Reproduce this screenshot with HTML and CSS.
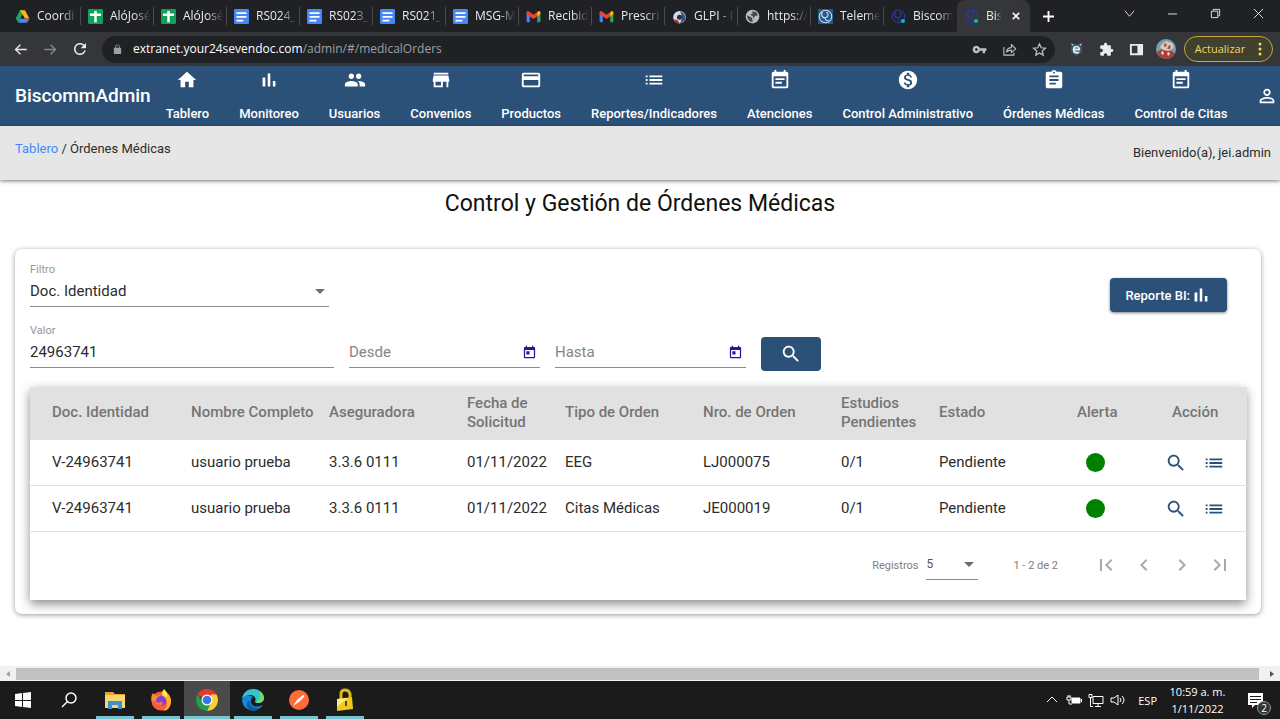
FILE: index.html
```html
<!DOCTYPE html>
<html lang="es">
<head>
<meta charset="utf-8">
<meta name="viewport" content="width=device-width, initial-scale=1">
<title>BiscommAdmin - Órdenes Médicas</title>
<link rel="stylesheet" href="styles.css">
</head>
<body>
<svg class="sprite" aria-hidden="true">
  <symbol id="home" viewBox="0 0 24 24"><path d="M10 20v-6h4v6h5v-8h3L12 3 2 12h3v8z"/></symbol>
  <symbol id="bars" viewBox="0 0 24 24"><path d="M5 9.200h3V19H5zM10.600 5h2.800v14h-2.800zm5.600 8H19v6h-2.800z"/></symbol>
  <symbol id="people" viewBox="0 0 24 24"><path d="M16 11c1.660 0 2.990-1.340 2.990-3S17.660 5 16 5c-1.660 0-3 1.340-3 3s1.340 3 3 3zm-8 0c1.660 0 2.990-1.340 2.990-3S9.660 5 8 5C6.340 5 5 6.340 5 8s1.340 3 3 3zm0 2c-2.330 0-7 1.170-7 3.500V19h14v-2.500c0-2.330-4.670-3.500-7-3.500zm8 0c-.29 0-.62.02-.97.05 1.160.84 1.970 1.970 1.970 3.450V19h6v-2.500c0-2.330-4.670-3.500-7-3.500z"/></symbol>
  <symbol id="store" viewBox="0 0 24 24"><path d="M20 4H4v2h16V4zm1 10v-2l-1-5H4l-1 5v2h1v6h10v-6h4v6h2v-6h1zm-9 4H6v-4h6v4z"/></symbol>
  <symbol id="card" viewBox="0 0 24 24"><path d="M20 4H4c-1.110 0-1.990.89-1.990 2L2 18c0 1.110.89 2 2 2h16c1.110 0 2-.89 2-2V6c0-1.110-.89-2-2-2zm0 14H4v-6h16v6zm0-10H4V6h16v2z"/></symbol>
  <symbol id="list" viewBox="0 0 24 24"><path d="M3 13h2v-2H3v2zm0 4h2v-2H3v2zm0-8h2V7H3v2zm4 4h14v-2H7v2zm0 4h14v-2H7v2zM7 7v2h14V7H7z"/></symbol>
  <symbol id="note" viewBox="0 0 24 24"><path d="M17 10H7v2h10v-2zm2-7h-1V1h-2v2H8V1H6v2H5c-1.110 0-1.990.9-1.990 2L3 19c0 1.100.89 2 2 2h14c1.100 0 2-.9 2-2V5c0-1.100-.9-2-2-2zm0 16H5V8h14v11zm-5-5H7v2h7v-2z"/></symbol>
  <symbol id="money" viewBox="0 0 24 24"><path d="M12 2C6.480 2 2 6.480 2 12s4.480 10 10 10 10-4.480 10-10S17.520 2 12 2zm1.410 16.090V20h-2.670v-1.930c-1.710-.36-3.160-1.460-3.270-3.400h1.960c.1 1.050.82 1.870 2.650 1.870 1.960 0 2.400-.98 2.400-1.590 0-.83-.44-1.610-2.670-2.140-2.480-.6-4.180-1.620-4.180-3.670 0-1.720 1.390-2.840 3.110-3.210V4h2.670v1.950c1.860.45 2.790 1.860 2.850 3.390H14.300c-.05-1.110-.64-1.870-2.220-1.870-1.500 0-2.400.68-2.400 1.640 0 .84.65 1.390 2.670 1.910s4.180 1.390 4.180 3.910c-.01 1.830-1.380 2.830-3.120 3.160z"/></symbol>
  <symbol id="clipboard" viewBox="0 0 24 24"><path d="M19 3h-4.180C14.400 1.840 13.300 1 12 1c-1.300 0-2.400.84-2.820 2H5c-1.100 0-2 .9-2 2v14c0 1.100.9 2 2 2h14c1.100 0 2-.9 2-2V5c0-1.100-.9-2-2-2zm-7 0c.55 0 1 .45 1 1s-.45 1-1 1-1-.45-1-1 .45-1 1-1zm2 14H7v-2h7v2zm3-4H7v-2h10v2zm0-4H7V7h10v2z"/></symbol>
  <symbol id="person" viewBox="0 0 24 24"><path d="M12 5.900c1.160 0 2.100.94 2.100 2.100s-.94 2.100-2.100 2.100S9.900 9.160 9.900 8s.94-2.100 2.100-2.100m0 9c2.970 0 6.100 1.460 6.100 2.100v1.100H5.900V17c0-.64 3.130-2.100 6.100-2.100M12 4C9.790 4 8 5.790 8 8s1.790 4 4 4 4-1.790 4-4-1.790-4-4-4zm0 9c-2.670 0-8 1.340-8 4v3h16v-3c0-2.660-5.330-4-8-4z"/></symbol>
  <symbol id="search" viewBox="0 0 24 24"><path d="M15.500 14h-.79l-.28-.27C15.410 12.590 16 11.110 16 9.500 16 5.910 13.090 3 9.500 3S3 5.910 3 9.500 5.910 16 9.500 16c1.610 0 3.090-.59 4.230-1.570l.27.28v.79l5 4.990L20.490 19l-4.990-5zm-6 0C7.010 14 5 11.990 5 9.500S7.010 5 9.500 5 14 7.010 14 9.500 11.990 14 9.500 14z"/></symbol>
  <symbol id="today" viewBox="0 0 24 24"><path d="M19 3h-1V1h-2v2H8V1H6v2H5c-1.110 0-2 .9-2 2v14c0 1.100.89 2 2 2h14c1.100 0 2-.9 2-2V5c0-1.100-.9-2-2-2zm0 16H5V8h14v11zM7 10h5v5H7z"/></symbol>
  <symbol id="first" viewBox="0 0 24 24"><path d="M18.410 16.590L13.820 12l4.590-4.590L17 6l-6 6 6 6zM6 6h2v12H6z"/></symbol>
  <symbol id="prev" viewBox="0 0 24 24"><path d="M15.410 7.410L14 6l-6 6 6 6 1.410-1.410L10.830 12z"/></symbol>
  <symbol id="next" viewBox="0 0 24 24"><path d="M10 6L8.590 7.410 13.170 12l-4.580 4.590L10 18l6-6z"/></symbol>
  <symbol id="last" viewBox="0 0 24 24"><path d="M5.590 7.410L10.180 12l-4.590 4.590L7 18l6-6-6-6zM16 6h2v12h-2z"/></symbol>
  <symbol id="back" viewBox="0 0 24 24"><path d="M22 10.800H6.800l5.900-5.700L11.100 3.500 2.500 12l8.600 8.500 1.600-1.600-5.900-5.700H22z"/></symbol>
  <symbol id="forward" viewBox="0 0 24 24"><path d="M2 10.800h15.200l-5.900-5.700 1.600-1.600 8.600 8.500-8.600 8.500-1.600-1.600 5.900-5.700H2z"/></symbol>
  <symbol id="reload" viewBox="0 0 24 24"><path d="M17.650 6.350C16.200 4.900 14.210 4 12 4c-4.420 0-8 3.580-8 8s3.580 8 8 8c3.730 0 6.840-2.550 7.730-6h-2.080c-.82 2.330-3.040 4-5.650 4-3.310 0-6-2.690-6-6s2.690-6 6-6c1.660 0 3.140.69 4.220 1.780L13 11h7V4z"/></symbol>
  <symbol id="lock" viewBox="0 0 24 24"><path d="M18 8h-1V6c0-2.760-2.240-5-5-5S7 3.240 7 6v2H6c-1.100 0-2 .9-2 2v10c0 1.100.9 2 2 2h12c1.100 0 2-.9 2-2V10c0-1.100-.9-2-2-2zM15.100 8H8.900V6c0-1.710 1.390-3.100 3.100-3.100s3.100 1.390 3.100 3.100z"/></symbol>
  <symbol id="key" viewBox="0 0 24 24"><path d="M12.650 10C11.830 7.670 9.610 6 7 6c-3.310 0-6 2.690-6 6s2.690 6 6 6c2.610 0 4.830-1.670 5.650-4H17v4h4v-4h2v-4zM7 14c-1.100 0-2-.9-2-2s.9-2 2-2 2 .9 2 2-.9 2-2 2z"/></symbol>
  <symbol id="share" viewBox="0 0 24 24"><path d="M3 8v13h16v-4M7 16c1-5 4-7 8-7V4l7 7-7 6v-4c-4 0-6 1-8 3z" fill="none" stroke="currentColor" stroke-width="1.700" stroke-linejoin="round"/></symbol>
  <symbol id="star" viewBox="0 0 24 24"><path d="M12 3l2.700 6.200 6.800.6-5.100 4.500 1.500 6.700-5.900-3.500L6.100 21l1.500-6.700-5.100-4.500 6.800-.6z" fill="none" stroke="currentColor" stroke-width="2"/></symbol>
  <symbol id="puzzle" viewBox="0 0 24 24"><path d="M20.500 11H19V7c0-1.100-.9-2-2-2h-4V3.500C13 2.120 11.880 1 10.500 1S8 2.120 8 3.500V5H4c-1.100 0-2 .9-2 2v3.800h1.500c1.490 0 2.700 1.210 2.700 2.700s-1.210 2.700-2.700 2.700H2V20c0 1.100.9 2 2 2h3.800v-1.500c0-1.490 1.210-2.700 2.700-2.700s2.700 1.210 2.700 2.700V22H17c1.100 0 2-.9 2-2v-4h1.500c1.380 0 2.500-1.120 2.500-2.500S21.880 11 20.500 11z"/></symbol>
  <symbol id="drive" viewBox="0 0 24 24"><path fill="#1ea362" d="M8 2h4v7L5 21 1 15z"/><path fill="#ffba00" d="M8 2h8l7 13h-7z"/><path fill="#4688f4" d="M8 15h15l-4 7H5z"/><path fill="#e94435" d="M17 15h6l-3 6z"/><path fill="#202124" d="M12 9l3 6H9z"/></symbol>
  <symbol id="sheet" viewBox="0 0 24 24"><rect width="24" height="24" rx="2" fill="#11a05a"/><path fill="#fff" d="M3 7h7V3h4v4h7v4h-7v10h-4V11H3z"/></symbol>
  <symbol id="doc" viewBox="0 0 24 24"><rect width="24" height="24" rx="2" fill="#4587f5"/><path fill="#fff" d="M4 5h16v3H4zm0 6h16v3H4zm0 6h11v3H4z"/></symbol>
  <symbol id="mail" viewBox="0 0 24 24"><path fill="#4285f4" d="M1 6l5 4v11H3q-2 0-2-2z"/><path fill="#34a853" d="M18 10l5-4v13q0 2-2 2h-3z"/><path fill="#ea4335" d="M1 5q1-3 4-1l7 5 7-5v7l-7 5-7-5-4-3z"/><path fill="#fbbc04" d="M18 5q5-4 5 1v2l-5 4z"/></symbol>
  <symbol id="glpi" viewBox="0 0 24 24"><circle cx="12" cy="13" r="10" fill="#d5dae5"/><path fill="#a33a3d" d="M3 17q7-1 9 6-7 0-9-6z"/><path fill="#34527d" d="M13 4q10 3 8 14l-8 5q5-10 0-19z"/><circle cx="12" cy="13" r="4" fill="#25304a"/></symbol>
  <symbol id="globe" viewBox="0 0 24 24"><circle cx="12" cy="12" r="11" fill="#b9bcc0"/><path fill="#45484d" d="M3 10l7 3 2 3v5Q4 20 3 10zm9-7l6 2 3 5-5 1-2 4-2-4-4-2 4-2z"/></symbol>
  <symbol id="steth" viewBox="0 0 24 24"><g fill="none" stroke="currentColor" stroke-width="1.800"><circle cx="12" cy="12" r="10"/><path d="M8 6Q5 6 6 10t5 4q5-1 5-5t-3-3M11 14q1 6 6 4"/></g></symbol>
</svg>

<header class="browser">
  <div class="tabstrip">
    <div class="tab"><svg><use href="#drive"/></svg><span>Coordi</span></div>
    <div class="tab"><svg><use href="#sheet"/></svg><span>AlóJosé</span></div>
    <div class="tab"><svg><use href="#sheet"/></svg><span>AlóJosé</span></div>
    <div class="tab"><svg><use href="#doc"/></svg><span>RS024_</span></div>
    <div class="tab"><svg><use href="#doc"/></svg><span>RS023_</span></div>
    <div class="tab"><svg><use href="#doc"/></svg><span>RS021_</span></div>
    <div class="tab"><svg><use href="#doc"/></svg><span>MSG-M</span></div>
    <div class="tab"><svg><use href="#mail"/></svg><span>Recibid</span></div>
    <div class="tab"><svg><use href="#mail"/></svg><span>Prescri</span></div>
    <div class="tab"><svg><use href="#glpi"/></svg><span>GLPI - I</span></div>
    <div class="tab"><svg><use href="#globe"/></svg><span>https://</span></div>
    <div class="tab"><svg class="fav-tele"><use href="#steth"/></svg><span>Teleme</span></div>
    <div class="tab tab-before"><svg class="fav-bis" viewBox="0 0 15 15"><use href="#steth"/><circle cx="12" cy="12" r="2" fill="#0cbfa5"/></svg><span>Biscom</span></div>
    <div class="tab tab-active"><svg class="fav-bis" viewBox="0 0 15 15"><use href="#steth"/><circle cx="12" cy="12" r="2" fill="#0cbfa5"/></svg><span>Bis</span>
      <button class="tab-close" aria-label="Cerrar pestaña"><svg viewBox="0 0 10 10"><path d="M1 1l8 8M9 1L1 9"/></svg></button></div>
    <button class="new-tab" aria-label="Nueva pestaña"><svg viewBox="0 0 12 12"><path d="M6 0v12M0 6h12"/></svg></button>
    <div class="window-controls">
      <button aria-label="Buscar pestañas"><svg viewBox="0 0 12 12"><path d="M1 3l5 6 5-6"/></svg></button>
      <button aria-label="Minimizar"><svg viewBox="0 0 12 12"><path d="M1 6.500h10"/></svg></button>
      <button aria-label="Restaurar"><svg viewBox="0 0 12 12"><path d="M1.500 3.500h7v7h-7zM3.500 3V1.500h7v7H9"/></svg></button>
      <button aria-label="Cerrar"><svg viewBox="0 0 12 12"><path d="M1 1l10 10M11 1L1 11"/></svg></button>
    </div>
  </div>
  <div class="toolbar">
    <button aria-label="Atrás"><svg><use href="#back"/></svg></button>
    <button class="dim" aria-label="Adelante"><svg><use href="#forward"/></svg></button>
    <button aria-label="Recargar"><svg class="reload"><use href="#reload"/></svg></button>
    <div class="address">
      <svg class="lock"><use href="#lock"/></svg>
      <div class="url"><b>extranet.your24sevendoc.com</b>/admin/#/medicalOrders</div>
      <button aria-label="Contraseñas"><svg><use href="#key"/></svg></button>
      <button aria-label="Compartir"><svg><use href="#share"/></svg></button>
      <button aria-label="Favoritos"><svg><use href="#star"/></svg></button>
    </div>
    <button class="ext" aria-label="Extensión"><svg viewBox="0 0 16 16"><path fill="#31566b" d="M2 2h12v9l-6 4-6-4z"/><path d="M12 9H6q1 2 5 1v2q-7 2-7-4 0-4 4-4 4 0 4 5zM6 7h4Q8 4 6 7zM2 1l3 2-1 1zM14 1l-3 2 1 1z"/></svg></button>
    <button aria-label="Extensiones"><svg><use href="#puzzle"/></svg></button>
    <button aria-label="Panel lateral"><svg viewBox="0 0 16 16"><path fill-rule="evenodd" d="M1 2h14v12H1zM3 4v8h6V4z"/></svg></button>
    <button aria-label="Perfil"><svg class="avatar" viewBox="0 0 20 20"><circle cx="10" cy="10" r="10" fill="#6fa6ae"/><path fill="#a83f3e" d="M1 13l5-3 8 1 5 3q-3 6-9 6T1 13z"/><path fill="#dfc5bb" d="M6 5l4-3 6 2 2 4-3 3-3 1-5-1-3-3z"/><path fill="#9e5752" d="M8 5l2-1 1 3-3 1zM13 6l2 1-1 3-3 0z"/><path fill="#e5d9d3" d="M5 13l2-1 1 3-2 1zM11 14l2-1 1 2-2 2z"/></svg></button>
    <button class="update">Actualizar<svg viewBox="0 0 4 14"><circle cx="2" cy="2" r="1.500"/><circle cx="2" cy="7" r="1.500"/><circle cx="2" cy="12" r="1.500"/></svg></button>
  </div>
</header>

<nav class="nav">
  <a class="brand" href="#/">BiscommAdmin</a>
  <a class="nav-link" href="#/tablero"><svg><use href="#home"/></svg>Tablero</a>
  <a class="nav-link" href="#/monitoreo"><svg><use href="#bars"/></svg>Monitoreo</a>
  <a class="nav-link" href="#/usuarios"><svg><use href="#people"/></svg>Usuarios</a>
  <a class="nav-link" href="#/convenios"><svg><use href="#store"/></svg>Convenios</a>
  <a class="nav-link" href="#/productos"><svg><use href="#card"/></svg>Productos</a>
  <a class="nav-link" href="#/reportes"><svg><use href="#list"/></svg>Reportes/Indicadores</a>
  <a class="nav-link" href="#/atenciones"><svg><use href="#note"/></svg>Atenciones</a>
  <a class="nav-link" href="#/control"><svg><use href="#money"/></svg>Control Administrativo</a>
  <a class="nav-link" href="#/medicalOrders"><svg><use href="#clipboard"/></svg>Órdenes Médicas</a>
  <a class="nav-link" href="#/citas"><svg><use href="#note"/></svg>Control de Citas</a>
  <button class="profile" aria-label="Cuenta"><svg><use href="#person"/></svg></button>
</nav>

<div class="subbar">
  <div class="crumbs"><a href="#/tablero">Tablero</a> / Órdenes Médicas</div>
  <div class="welcome">Bienvenido(a), jei.admin</div>
</div>

<main class="page">
  <h1>Control y Gestión de Órdenes Médicas</h1>
  <section class="card">
    <div class="filter-row">
      <div class="field filter">
        <label for="filtro">Filtro</label>
        <div class="control"><select id="filtro"><option>Doc. Identidad</option></select><i class="caret"></i></div>
      </div>
      <button class="btn report">Reporte BI:<svg><use href="#bars"/></svg></button>
    </div>
    <form class="search-row">
      <div class="field value">
        <label for="valor">Valor</label>
        <div class="control"><input id="valor" type="text" value="24963741"></div>
      </div>
      <div class="field date"><div class="control"><input type="text" placeholder="Desde" aria-label="Desde"><button type="button" aria-label="Elegir fecha desde"><svg><use href="#today"/></svg></button></div></div>
      <div class="field date"><div class="control"><input type="text" placeholder="Hasta" aria-label="Hasta"><button type="button" aria-label="Elegir fecha hasta"><svg><use href="#today"/></svg></button></div></div>
      <button class="btn go" type="button" aria-label="Buscar"><svg><use href="#search"/></svg></button>
    </form>
    <div class="panel">
      <table>
        <colgroup><col class="c-doc"><col class="c-wide"><col class="c-wide"><col class="c-mid"><col class="c-wide"><col class="c-wide"><col class="c-mid"><col class="c-wide"><col class="c-alert"><col class="c-action"></colgroup>
        <thead><tr><th>Doc. Identidad</th><th>Nombre Completo</th><th>Aseguradora</th><th>Fecha de Solicitud</th><th>Tipo de Orden</th><th>Nro. de Orden</th><th>Estudios Pendientes</th><th>Estado</th><th>Alerta</th><th>Acción</th></tr></thead>
        <tbody>
          <tr><td>V-24963741</td><td>usuario prueba</td><td>3.3.6 0111</td><td>01/11/2022</td><td>EEG</td><td>LJ000075</td><td>0/1</td><td>Pendiente</td><td><i class="dot"></i></td>
            <td><div class="actions"><button aria-label="Ver"><svg><use href="#search"/></svg></button><button aria-label="Lista"><svg><use href="#list"/></svg></button></div></td></tr>
          <tr><td>V-24963741</td><td>usuario prueba</td><td>3.3.6 0111</td><td>01/11/2022</td><td>Citas Médicas</td><td>JE000019</td><td>0/1</td><td>Pendiente</td><td><i class="dot"></i></td>
            <td><div class="actions"><button aria-label="Ver"><svg><use href="#search"/></svg></button><button aria-label="Lista"><svg><use href="#list"/></svg></button></div></td></tr>
        </tbody>
      </table>
      <div class="paginator">
        <label for="registros">Registros</label>
        <div class="control"><select id="registros"><option>5</option></select><i class="caret"></i></div>
        <span class="range">1 - 2 de 2</span>
        <button disabled aria-label="Primera página"><svg><use href="#first"/></svg></button>
        <button disabled aria-label="Anterior"><svg><use href="#prev"/></svg></button>
        <button disabled aria-label="Siguiente"><svg><use href="#next"/></svg></button>
        <button disabled aria-label="Última página"><svg><use href="#last"/></svg></button>
      </div>
    </div>
  </section>
</main>

<div class="hscroll">
  <svg class="off" viewBox="0 0 16 14"><path d="M10 4v6L6 7z"/></svg>
  <div class="thumb"></div>
  <svg viewBox="0 0 16 14"><path d="M6 4v6l4-3z"/></svg>
</div>

<footer class="taskbar">
  <button class="app" aria-label="Inicio"><svg viewBox="0 0 24 24"><path fill="#fff" d="M4 6l7-1v7H4zM12 5l8-1v8h-8zM4 13h7v6l-7-1zM12 13h8v7l-8-1z"/></svg></button>
  <button class="app" aria-label="Buscar"><svg viewBox="0 0 24 24"><g fill="none" stroke="#fff" stroke-width="1.500"><circle cx="14" cy="10" r="5"/><path d="M10.500 13.500L5 19"/></g></svg></button>
  <button class="app open" aria-label="Explorador de archivos"><svg viewBox="0 0 24 24"><path fill="#e5a82b" d="M2 4h8l2 2h10v4H2z"/><path fill="#f9d66e" d="M2 7h20v13H2z"/><path fill="#3f8fcb" d="M5 21v-8h14v8h-4v-4H9v4z"/></svg></button>
  <button class="app open" aria-label="Firefox"><svg viewBox="0 0 24 24"><circle cx="12" cy="13" r="9.500" fill="#ff5a37"/><path fill="#ffb02e" d="M14 2q9 4 8 13-1 7-8 8 5-4 4-9-1-5-5-6-1-3 1-6z"/><path fill="#ff8a2c" d="M4 5l3 3 4-1-2 4-6 3q-2-5 1-9z"/><circle cx="12" cy="13" r="5" fill="#7542e5"/><path fill="#ff7139" d="M6 13q3 3 7 0 2 4-2 5-5 0-5-5z"/><path fill="#fff04d" d="M15 1q4 4 3 8l-4-2q-1-3 1-6z"/></svg></button>
  <button class="app open current" aria-label="Chrome"><svg viewBox="0 0 24 24"><path fill="#e33b2e" d="M2.500 6.500a11 11 0 0 1 19 0L12 12z"/><path fill="#ffce33" d="M21.500 6.500a11 11 0 0 1-9.500 16.500L16 13V6.500z"/><path fill="#229f4b" d="M2.500 6.500A11 11 0 0 0 12 23l4-8-8 0z"/><circle cx="12" cy="12" r="5.500" fill="#fff"/><circle cx="12" cy="12" r="4.300" fill="#3779e3"/></svg></button>
  <button class="app open" aria-label="Edge"><svg viewBox="0 0 24 24"><path fill="#1686d6" d="M1 12a11 11 0 0 0 18 8q2-1 3-3-9 4-12-2-1-4 2-6-7-4-11 3z"/><path fill="#31c6ce" d="M1 11C2 4 7 1 12 1c7 0 11 5 11 9 0 5-6 6-9 4 3-7-7-10-13-3z"/><path fill="#6bdf68" d="M18 3q5 3 5 7c0 5-6 6-9 4 5-2 6-6 4-11z"/><path fill="#0c5aa6" d="M8 12q0 9 11 8-7 6-12 0-3-4 1-8z"/></svg></button>
  <button class="app open" aria-label="Postman"><svg viewBox="0 0 24 24"><circle cx="12" cy="12" r="10" fill="#ff6c37"/><path fill="#fff" d="M6 18l4-6 6-5q2 0 1 2l-5 5z"/></svg></button>
  <button class="app open" aria-label="Candado"><svg viewBox="0 0 24 24"><path fill="none" stroke="#dfb912" stroke-width="3" d="M8 11V6q0-4 4-4t5 4v5"/><path fill="#f0c91f" d="M4 11l15-2 1 12-16 2z"/><path fill="#fae985" d="M4 11l11-1L4 19z"/><path fill="#594c11" d="M12 13h2v5h-2z"/></svg></button>
  <div class="tray">
    <svg viewBox="0 0 16 16"><path d="M3 10l5-5 5 5"/></svg>
    <svg viewBox="0 0 16 16"><path d="M1 5h4v3H1zM2 3v2M4 3v2M3 8v4h3"/><path fill="#fff" d="M6 6h8v5H6z"/><path d="M15.500 7v3"/></svg>
    <svg viewBox="0 0 16 16"><path d="M5 4.500h10v7H5zM10 12v2M7 14.500h6M1 2.500h3v3H1zM2.500 6v8.500H5"/></svg>
    <svg viewBox="0 0 16 16"><path d="M1 6h3l4-3v10l-4-3H1zM10 6q2 2 0 4M12 4q4 4 0 8"/></svg>
    <span class="lang">ESP</span>
    <div class="clock"><span>10:59 a. m.</span><span>1/11/2022</span></div>
    <button class="notices" aria-label="2 notificaciones"><svg viewBox="0 0 18 18"><path fill="#fff" stroke="none" d="M1 2h15v12H8l-3 3v-3H1z"/><path stroke="#1b1b1b" d="M3 5.500h11M3 8.500h11M3 11.500h7"/></svg><span class="badge">2</span></button>
  </div>
</footer>
</body>
</html>
```
FILE: styles.css
```css
*, *::before, *::after { box-sizing: border-box; }

body {
  margin: 0;
  min-height: 100vh;
  display: flex;
  flex-direction: column;
  overflow-x: hidden;
  background: #fff;
  color: #2c2c2c;
  font: 15px/19px Roboto, "Liberation Sans", sans-serif;
}

button, input, select {
  font: inherit;
  color: inherit;
  background: none;
  border: 0;
  padding: 0;
  margin: 0;
}

button { display: flex; align-items: center; justify-content: center; }
a { color: inherit; text-decoration: none; }
svg { flex: none; fill: currentColor; }
.sprite { position: absolute; width: 0; height: 0; }

/* Browser chrome */
.browser {
  background: #202124;
  color: #e8eaed;
  font: 12px/16px "Open Sans", "Noto Sans", sans-serif;
}

.tabstrip { display: flex; height: 32px; padding-left: 8px; }

.tab {
  flex: 0 1 73px;
  min-width: 0;
  display: flex;
  align-items: center;
  gap: 7px;
  padding: 0 0 0 7px;
  position: relative;
}

.tab::after {
  content: "";
  position: absolute;
  right: 0;
  top: 7px;
  width: 1px;
  height: 18px;
  background: #4a4c50;
}

.tab svg { width: 15px; height: 15px; }

.tab span {
  flex: 1;
  white-space: nowrap;
  mask-image: linear-gradient(90deg, #000 55%, transparent 92%);
}

.tab-before::after, .tab-active::after { display: none; }
.tab-active { background: #35363a; border-radius: 8px 8px 0 0; }
.tab .tab-close { width: 16px; margin-right: 8px; }
.tab .tab-close svg { width: 8px; height: 8px; stroke: #fff; stroke-width: 2; }
.fav-tele { color: #c5d9ef; background: #24598b; }
.fav-bis { color: #2a3ba5; }

.new-tab { width: 37px; }
.new-tab svg { width: 11px; height: 11px; stroke: #fff; stroke-width: 2; }

.window-controls { margin-left: auto; display: flex; height: 27px; }
.window-controls button { width: 43px; }
.window-controls svg { width: 11px; height: 11px; fill: none; stroke: #e8eaed; }

.toolbar {
  display: flex;
  align-items: center;
  height: 34px;
  padding: 0 7px 0 5px;
  background: #35363a;
}

.toolbar button { width: 30px; }
.toolbar svg { width: 15px; height: 15px; }
.toolbar .reload { width: 18px; height: 18px; }
.toolbar .dim { color: #85878b; }
.toolbar .avatar { width: 20px; height: 20px; }

.address {
  flex: 1;
  display: flex;
  align-items: center;
  height: 27px;
  margin: 0 6px 0 7px;
  padding: 0 1px 0 10px;
  border-radius: 14px;
  background: #202124;
  color: #bdc1c6;
}

.address .lock { width: 11px; height: 11px; color: #9aa0a6; }
.url { flex: 1; padding-left: 10px; color: #9aa0a6; }
.url b { font-weight: 400; color: #fff; }

.toolbar .update {
  width: 89px;
  height: 26px;
  margin-left: 3px;
  gap: 13px;
  border: 1px solid #c4a842;
  border-radius: 13px;
  background: #40402f;
  color: #f8d35b;
  font-size: 11px;
}
.toolbar .update svg { width: 4px; height: 14px; }

/* Application bar */
.nav {
  display: flex;
  height: 60px;
  padding: 0 2px 0 15px;
  background: #2b5178;
  color: #fff;
  font-size: 13px;
  font-weight: 500;
  white-space: nowrap;
}

.brand { align-self: center; font-size: 19px; line-height: 24px; }

.nav-link {
  display: flex;
  flex-direction: column;
  align-items: center;
  gap: 13px;
  padding: 3px 15px 0;
}
.nav-link svg, .profile svg { width: 22px; height: 22px; }
.profile { margin-left: auto; }

.subbar {
  display: flex;
  justify-content: space-between;
  height: 54px;
  padding: 14px 9px 0 15px;
  background: #e6e6e6;
  box-shadow: 0 1px 4px rgba(0, 0, 0, .55);
  font-size: 13px;
  line-height: 18px;
}
.crumbs a { color: #448aff; }
.welcome { padding-top: 4px; }

.page { flex: 1; padding: 10px 19px 52px 15px; }

h1 {
  margin: 0 0 31px 4px;
  color: #111;
  font-size: 23px;
  line-height: 28px;
  font-weight: 400;
  text-align: center;
}

.card {
  padding: 14px 15px;
  border-radius: 7px;
  box-shadow: 0 1px 5px rgba(0, 0, 0, .4);
}

.filter-row { display: flex; justify-content: space-between; align-items: flex-start; }
.field { display: flex; flex-direction: column; }
.filter { width: 299px; }
.value { width: 304px; }
.date { width: 191px; }

.field label { color: #959595; font-size: 11px; line-height: 14px; }

.control {
  display: flex;
  align-items: center;
  position: relative;
  height: 30px;
  border-bottom: 1px solid #8c8c8c;
}
.control input, .control select { flex: 1; min-width: 0; width: 100%; appearance: none; outline: 0; }
.control input::placeholder { color: #858585; opacity: 1; }

.caret {
  position: absolute;
  right: 4px;
  top: 12px;
  border: 5px solid transparent;
  border-top-color: #6e6e6e;
  border-bottom: 0;
  pointer-events: none;
}

.date button { color: #201a9e; width: 22px; }
.date button svg { width: 15px; height: 15px; }

.btn {
  height: 34px;
  border-radius: 4px;
  background: #2b5178;
  color: #fff;
  font-size: 13px;
  font-weight: 500;
}
.btn svg { width: 22px; height: 22px; }
.report { padding: 0 15px; margin: 15px 19px -6px 0; box-shadow: 0 1px 3px rgba(0, 0, 0, .5); }

.search-row { display: flex; align-items: flex-end; gap: 15px; padding-top: 17px; }
.go { width: 60px; margin-bottom: -3px; }

.panel { margin-top: 19px; box-shadow: 0 4px 10px rgba(0, 0, 0, .45); }

table { width: 100%; border-collapse: separate; border-spacing: 0; table-layout: fixed; }
.c-doc { width: 161px; }
.c-wide { width: 138px; }
.c-mid { width: 98px; }
.c-alert { width: 75px; }
.c-action { width: 95px; }

th, td { padding: 0; text-align: left; }
th { height: 53px; padding: 0 6px 2px 0; background: #e1e1e1; color: #757575; font-weight: 500; }
th:first-child, td:first-child { padding-left: 22px; }
th:last-child { padding-left: 20px; padding-right: 0; }
td { height: 46px; border-bottom: 1px solid #e0e0e0; }

.dot { display: block; width: 19px; height: 19px; margin-left: 9px; border-radius: 50%; background: #008000; }
.actions { display: flex; gap: 16px; padding-left: 13px; color: #2b5178; }
.actions svg { width: 22px; height: 22px; }

.paginator {
  display: flex;
  align-items: center;
  height: 68px;
  padding: 0 7px 2px 0;
  justify-content: flex-end;
  color: #808080;
  font-size: 11px;
}
.paginator .control { width: 52px; margin: 0 35px 0 8px; color: #555; font-size: 12px; }
.range { margin-right: 29px; }
.paginator button { width: 38px; color: #a9a9a9; }
.paginator svg { width: 24px; height: 24px; }

/* Horizontal scroll bar */
.hscroll { display: flex; align-items: center; height: 15px; background: #f1f1f1; color: #505050; }
.hscroll svg { width: 16px; height: 14px; }
.hscroll .off { color: #a3a3a3; }
.thumb { flex: 1; height: 12px; margin-right: 5px; background: #c1c1c1; }

/* Desktop task bar */
.taskbar {
  display: flex;
  height: 38px;
  background: #1b1b1b;
  color: #fff;
  font: 11px/17px "Open Sans", "Noto Sans", sans-serif;
}
.app { width: 46px; }
.app svg { width: 24px; height: 24px; }
.open { background: linear-gradient(#76c5d2, #76c5d2) center bottom / 38px 3px no-repeat; }
.current { background-color: #4a4a4a; background-size: 100% 3px; }

.tray { margin-left: auto; display: flex; align-items: center; gap: 6px; }
.tray > svg { width: 16px; height: 16px; fill: none; stroke: #fff; }
.lang { margin: 0 6px; }
.clock {
  display: flex;
  flex-direction: column;
  align-items: center;
  width: 57px;
  white-space: nowrap;
}
.notices { position: relative; width: 48px; height: 100%; }
.notices svg { width: 18px; height: 18px; }
.badge {
  position: absolute;
  right: 9px;
  bottom: 4px;
  width: 14px;
  height: 14px;
  border: 1px solid #999;
  border-radius: 50%;
  background: #333;
  font-size: 10px;
  line-height: 12px;
}
```
